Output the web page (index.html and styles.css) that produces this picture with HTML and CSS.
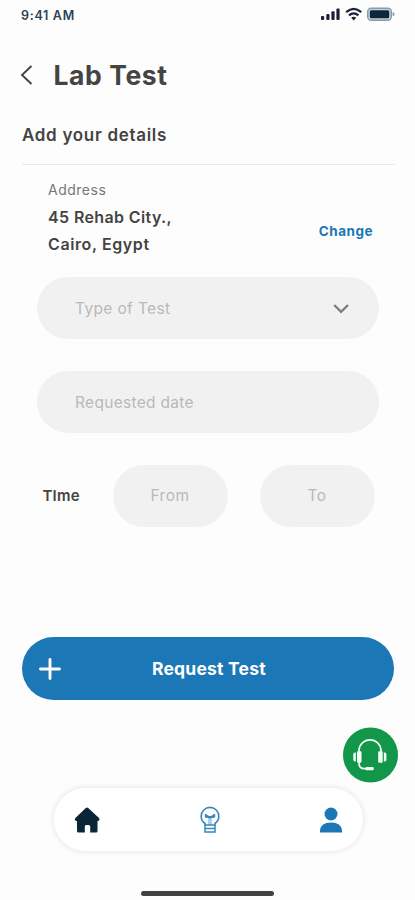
FILE: index.html
```html
<!DOCTYPE html>
<html lang="en">
<head>
<meta charset="utf-8">
<meta name="viewport" content="width=device-width, initial-scale=1">
<title>Lab Test</title>
<link rel="stylesheet" href="styles.css">
</head>
<body>
<div class="screen">
  <div class="status">
    <span class="clock">9:41 AM</span>
    <svg class="indicators" width="76" height="16" viewBox="0 0 76 16">
      <g fill="#1b2038">
        <rect x="1" y="10" width="3.2" height="4" rx="1"/>
        <rect x="6.3" y="8" width="3.2" height="6" rx="1"/>
        <rect x="11.4" y="5.3" width="3.2" height="8.7" rx="1"/>
        <rect x="16.4" y="2.5" width="3.2" height="11.5" rx="1"/>
      </g>
      <g fill="none" stroke="#1b2038" stroke-width="2.3">
        <path d="M26.2 6.2Q33.7-.5 41.2 6.2"/>
        <path d="M29 9.4Q33.7 5.3 38.4 9.4"/>
      </g>
      <path d="M31.2 11.8Q33.7 9.6 36.2 11.8L33.7 14.4Z" fill="#1b2038"/>
      <rect x="47.7" y="2.2" width="23.6" height="12" rx="3.5" fill="#c9d3d8" stroke="#8b9ba6" stroke-width="1.4"/>
      <rect x="49.8" y="4.2" width="19.4" height="8" rx="1.5" fill="#0c263b"/>
      <path d="M72.6 6v4.4q1.9-.6 1.9-2.2t-1.9-2.2Z" fill="#8b9ba6"/>
    </svg>
  </div>
  <header class="header">
    <svg class="back" width="14" height="22" viewBox="0 0 14 22"><path d="M11.500 2 2 11l9.500 9" fill="none" stroke="#444" stroke-width="1.900"/></svg>
    <h1 class="title">Lab Test</h1>
  </header>
  <h2 class="subtitle"><span>Add your details</span></h2>
  <section class="address">
    <div class="place">
      <span class="label">Address</span>
      <p class="lines"><span class="line-one">45 Rehab City.,</span><br><span class="line-two">Cairo, Egypt</span></p>
    </div>
    <a class="change">Change</a>
  </section>
  <form class="form">
    <div class="field"><span class="type">Type of Test</span>
      <svg class="chevron" width="18" height="12" viewBox="0 0 18 12"><path d="m2.200 2 6.900 6.900L16 2" fill="none" stroke="#7d7d7d" stroke-width="2.300"/></svg>
    </div>
    <div class="field"><span class="date">Requested date</span></div>
    <div class="time"><span class="time-label">TIme</span>
      <div class="slot"><span class="from">From</span></div>
      <div class="slot"><span class="to">To</span></div>
    </div>
  </form>
  <div class="request">
    <svg width="24" height="24" viewBox="0 0 24 24"><path d="M12 2.500v19M2.500 12h19" fill="none" stroke="#fff" stroke-width="2.900" stroke-linecap="round"/></svg>
    <span class="request-text">Request Test</span>
  </div>
  <div class="support">
    <svg width="56" height="56" viewBox="0 0 56 56">
      <circle cx="27.500" cy="28" r="27.500" fill="#12964a"/>
      <g fill="none" stroke="#f4fff5" stroke-width="1.700">
        <path d="M16 25v-1.200a11 11 0 0 1 22 0V25"/>
        <path d="M16 34v2q0 5.700 5.500 5.700h2"/>
      </g>
      <g fill="#f4fff5">
        <rect x="14" y="24.300" width="4.500" height="11.500" rx="1"/>
        <path d="M12.800 25.500v9H12q-1.700 0-1.700-2v-5q0-2 1.700-2Z"/>
        <rect x="35.200" y="24.300" width="4.500" height="11.500" rx="1"/>
        <path d="M40.900 25.500v9h.8q1.700 0 1.700-2v-5q0-2-1.700-2Z"/>
        <rect x="22.500" y="40" width="8.300" height="3.300" rx="1.200"/>
      </g>
    </svg>
  </div>
  <nav class="nav">
    <svg width="26" height="26" viewBox="0 0 26 26"><path d="M11.800 1.100q1.200-1.100 2.400 0L25 11.100q1.300 3-1.500 3V24q0 1.500-1.500 1.500h-5.800V19.500q0-1.500-1.500-1.500h-2.500q-1.400 0-1.400 1.500v6H4.500Q3 25.500 3 24v-9.900q-3.200 0-1.600-3Z" fill="#082638"/></svg>
    <svg width="20" height="28" viewBox="0 0 20 28">
      <g fill="none" stroke="#3688bd" stroke-width="1.600">
        <path d="M5 19v-1.500Q1.200 14.700 1.200 10.200a8.800 8.800 0 0 1 17.600 0q0 4.500-3.800 7.300V19Z"/>
        <path d="M5 19v7h10v-7M5 22.500h10" stroke-width="1.500"/>
        <path d="M9 19v-6M11 19v-6" stroke-width=".8"/>
      </g>
      <path d="M4.800 8q1.700-.5 2.700 1.300 2.500 1.400 5 0 1-1.800 2.700-1.300v3.200q-1.300 1-2.700.6-2.500 2.100-5 0-1.400.4-2.700-.6Z" fill="#3688bd"/>
    </svg>
    <svg width="24" height="26" viewBox="0 0 24 26"><circle cx="12" cy="7" r="6.500" fill="#1b77b5"/><path d="M1 25.500v-2.200Q1.800 15.500 12 15.500t11 7.800v2.200Z" fill="#1b77b5"/></svg>
  </nav>
  <div class="handle"></div>
</div>
</body>
</html>
```
FILE: styles.css
```css
* { box-sizing: border-box; }
body { margin: 0; background: #fdfdfd; font-family: Inter, sans-serif; color: #444; }
.screen { width: 415px; height: 900px; display: flex; flex-direction: column; overflow: hidden; }
span, a, h1 { white-space: nowrap; }
.status { height: 30px; padding: 6px 20px 0 21px; display: flex; justify-content: space-between; }
.clock { font-size: 12.5px; line-height: 20px; font-weight: 600; color: #2a4258; letter-spacing: .7px; }
.indicators { margin-right: -1px; }
.header { height: 90px; padding-left: 20px; display: flex; align-items: center; gap: 19.5px; }
.title { margin: 0; font-size: 26.5px; line-height: 32px; font-weight: 700; letter-spacing: .6px; }
.subtitle { margin: 0 20px 0 22px; height: 45px; padding-top: 3px; border-bottom: 1px solid #e9e9e9; font-size: 17px; line-height: 24px; font-weight: 600; letter-spacing: .7px; }
.address { height: 112px; padding: 15px 42px 0 48px; display: flex; justify-content: space-between; align-items: flex-start; }
.label { display: block; font-size: 14px; line-height: 20px; color: #777; letter-spacing: .5px; }
.lines { margin: 4px 0 0; font-size: 16px; line-height: 27px; font-weight: 600; letter-spacing: .38px; }
.line-two { letter-spacing: .6px; }
.change { margin-top: 41px; font-size: 13.5px; line-height: 20px; font-weight: 700; color: #1b77b5; letter-spacing: .5px; }
.form { padding-left: 37px; display: flex; flex-direction: column; gap: 32px; font-size: 15.5px; line-height: 20px; color: #b9b9b9; }
.field { width: 342px; height: 62px; border-radius: 31px; background: #f1f1f1; padding: 0 29px 0 38px; display: flex; align-items: center; justify-content: space-between; }
.type { letter-spacing: .36px; padding-top: 1px; }
.date { letter-spacing: .3px; padding-top: 1px; }
.from, .to { letter-spacing: .5px; padding-bottom: 1px; }
.chevron { margin-top: 2px; }
.time { display: flex; align-items: center; padding-left: 6px; gap: 32px; }
.time-label { width: 38px; color: #444; font-size: 15px; font-weight: 600; letter-spacing: .2px; margin: -1px 0 0 -.5px; }
.slot { width: 115px; height: 62px; border-radius: 31px; background: #f1f1f1; display: flex; align-items: center; justify-content: center; }
.request { margin: 110px 21px 0 22px; height: 63px; border-radius: 32px; background: #1b77b5; color: #fff; display: flex; align-items: center; padding-left: 16px; gap: 90px; }
.request-text { font-size: 17.5px; line-height: 22px; font-weight: 700; letter-spacing: .2px; }
.support { height: 56px; margin: 27px 16px 0 0; display: flex; justify-content: flex-end; }
.nav { margin: 5px 52px 0 54px; height: 63px; border-radius: 32px; background: #fff; box-shadow: 0 0 4px 2px #eee; display: flex; align-items: center; justify-content: space-between; padding: 0 20px; }
.handle { width: 133px; height: 5px; border-radius: 3px; background: #414141; margin: 40px 0 0 141px; }
```
